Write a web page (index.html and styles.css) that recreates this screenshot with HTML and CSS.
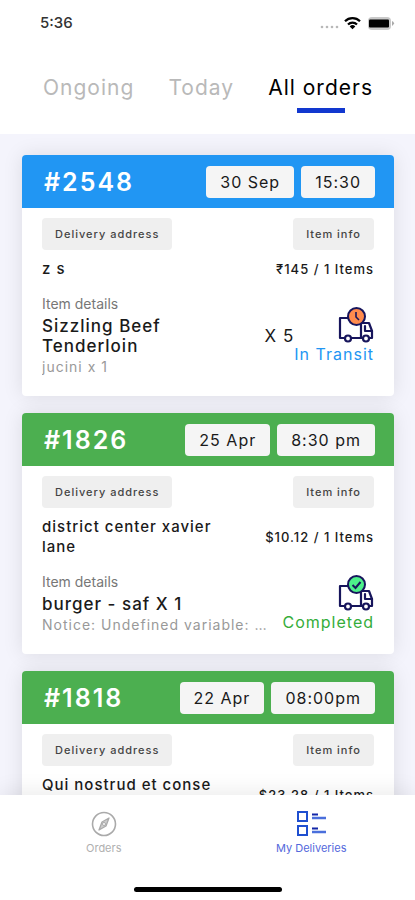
FILE: index.html
```html
<!DOCTYPE html>
<html lang="en">
<head>
<meta charset="utf-8">
<meta name="viewport" content="width=device-width, initial-scale=1">
<title>My Deliveries</title>
<link rel="stylesheet" href="styles.css">
</head>
<body>
<svg class="symbols" aria-hidden="true">
  <symbol id="truck" viewBox="0 0 36 36">
    <g fill="none" stroke="#17155c" stroke-width="2.200" stroke-linejoin="round" stroke-linecap="round">
      <path d="M10 11H2v20h4M12 31h12M30 31h4v-7l-3-8h-8v15"/>
      <path d="M27 19v5h7"/>
      <circle cx="10" cy="31.500" r="3" fill="#fff"/>
      <circle cx="28" cy="31.500" r="3" fill="#fff"/>
    </g>
  </symbol>
</svg>
<div class="app">
  <header class="top">
    <div class="status">
      <time class="clock">5:36</time>
      <svg class="signals" width="76" height="16" viewBox="0 0 76 16" aria-hidden="true">
        <g fill="#b8b8b8"><circle cx="3" cy="12" r="1.3"/><circle cx="8" cy="12" r="1.3"/><circle cx="13" cy="12" r="1.3"/><circle cx="18" cy="12" r="1.3"/></g>
        <g fill="none" stroke="#000" stroke-width="2.2"><path d="M26 6.2a10.5 10.5 0 0 1 15 0M29 9.5a6.3 6.3 0 0 1 9 0"/></g>
        <path d="M30.700 11.400a4 4 0 0 1 5.600 0L33.500 14.200z"/>
        <rect x="49" y="2" width="23" height="13" rx="4" fill="#c9c9c9"/>
        <rect x="50" y="4.500" width="20" height="8" rx="1"/>
        <path d="M73 6q4 2 0 5z" fill="#aaa"/>
      </svg>
    </div>
    <nav class="tabs" aria-label="Order filter">
      <a class="tab" href="#ongoing">Ongoing</a>
      <a class="tab" href="#today">Today</a>
      <a class="tab tab-active" href="#all" aria-current="page">All orders</a>
    </nav>
  </header>

  <main class="orders">
    <article class="card">
      <header class="card-head transit">
        <h2 class="number">#2548</h2>
        <time class="stamp">30 Sep</time>
        <time class="stamp">15:30</time>
      </header>
      <div class="card-body">
        <div class="row">
          <button class="chip" type="button">Delivery address</button>
          <button class="chip" type="button">Item info</button>
        </div>
        <div class="row summary">
          <p class="address">z s</p>
          <p class="price">₹145 / 1 Items</p>
        </div>
        <div class="row details">
          <div class="item">
            <p class="caption">Item details</p>
            <p class="name name-narrow">Sizzling Beef Tenderloin</p>
            <p class="note">jucini x 1</p>
          </div>
          <p class="quantity">X 5</p>
          <div class="state state-transit">
            <svg class="truck" viewBox="0 0 36 36" aria-hidden="true">
              <use href="#truck"/>
              <circle cx="18.500" cy="9.500" r="8.500" fill="#ff8b4d" stroke="#17155c" stroke-width="2"/>
              <path d="M18 5v5l3 3" fill="none" stroke="#17155c" stroke-width="1.600"/>
            </svg>
            <p>In Transit</p>
          </div>
        </div>
      </div>
    </article>

    <article class="card">
      <header class="card-head completed">
        <h2 class="number">#1826</h2>
        <time class="stamp">25 Apr</time>
        <time class="stamp">8:30 pm</time>
      </header>
      <div class="card-body">
        <div class="row">
          <button class="chip" type="button">Delivery address</button>
          <button class="chip" type="button">Item info</button>
        </div>
        <div class="row summary">
          <p class="address">district center xavier lane</p>
          <p class="price">$10.12 / 1 Items</p>
        </div>
        <div class="row details">
          <div class="item">
            <p class="caption">Item details</p>
            <p class="name">burger - saf X 1</p>
            <p class="note">Notice: Undefined variable: …</p>
          </div>
          <div class="state state-completed">
            <svg class="truck" viewBox="0 0 36 36" aria-hidden="true">
              <use href="#truck"/>
              <circle cx="18.500" cy="9.500" r="8.500" fill="#4df08a" stroke="#17155c" stroke-width="2"/>
              <path d="M14.500 10l3 3 5-6" fill="none" stroke="#17155c" stroke-width="2"/>
            </svg>
            <p>Completed</p>
          </div>
        </div>
      </div>
    </article>

    <article class="card">
      <header class="card-head completed">
        <h2 class="number">#1818</h2>
        <time class="stamp">22 Apr</time>
        <time class="stamp">08:00pm</time>
      </header>
      <div class="card-body">
        <div class="row">
          <button class="chip" type="button">Delivery address</button>
          <button class="chip" type="button">Item info</button>
        </div>
        <div class="row summary">
          <p class="address">Qui nostrud et conse<br>&nbsp;</p>
          <p class="price">$23.28 / 1 Items</p>
        </div>
      </div>
    </article>
  </main>

  <footer class="bottom">
    <nav class="bar" aria-label="Main">
      <a class="bar-item" href="#orders">
        <svg width="30" height="28" viewBox="0 0 30 28" fill="none" stroke="#aaa" aria-hidden="true">
          <circle cx="15" cy="14" r="11.500" stroke-width="1.600"/>
          <path d="M20 8l-3 8-7 4 3-8z" fill="#ccc" stroke-width="1.300" stroke-linejoin="round"/>
          <circle cx="15" cy="14" r="1.500" fill="#fff"/>
        </svg>
        <span>Orders</span>
      </a>
      <a class="bar-item bar-active" href="#deliveries" aria-current="page">
        <svg width="30" height="28" viewBox="0 0 30 28" fill="none" stroke="#1f4fd0" stroke-width="2" aria-hidden="true">
          <path d="M2 2h9v9H2zM2 16h9v9H2z"/>
          <path d="M16 4.500h6M16 18.500h6" stroke="#1226a8"/>
          <path d="M16 8h14M16 22h14" stroke="#4a6fdc" stroke-width="2.500"/>
        </svg>
        <span>My Deliveries</span>
      </a>
    </nav>
    <div class="home"></div>
  </footer>
</div>
</body>
</html>
```

FILE: styles.css
```css
* {
  box-sizing: border-box;
}

body,
p,
h2 {
  margin: 0;
}

body {
  font-family: Inter, "Liberation Sans", sans-serif;
  color: #1a1a1a;
  background: #fff;
}

a {
  color: inherit;
  text-decoration: none;
}

.symbols {
  display: block;
  width: 0;
  height: 0;
}

.app {
  display: flex;
  flex-direction: column;
  height: 100vh;
  overflow: hidden;
}

.top {
  flex: none;
  padding: 12px 20px 21px 40px;
}

.status {
  display: flex;
  align-items: center;
  justify-content: space-between;
  line-height: 22px;
}

.clock {
  font-size: 15px;
  font-weight: 500;
  color: #333;
}

.tabs {
  display: flex;
  justify-content: space-between;
  padding: 40px 22px 0 3px;
  font-size: 21px;
  line-height: 28px;
  letter-spacing: 1px;
}

.tab {
  color: #b9b9b9;
}

.tab-active {
  color: #000;
}

.tab::after {
  content: "";
  display: block;
  width: 48px;
  height: 5px;
  margin: 6px auto 0;
}

.tab-active::after {
  background: #1238cf;
}

.orders {
  flex: 1;
  min-height: 0;
  overflow: hidden;
  padding: 21px 21px 0 22px;
  background: #f4f4fc;
}

.card {
  margin-bottom: 17px;
  border-radius: 4px;
  background: #fff;
  box-shadow: 0 0 20px rgba(0, 0, 0, 0.1);
}

.card-head {
  display: flex;
  align-items: center;
  gap: 7px;
  height: 53px;
  padding: 0 19px 0 22px;
  border-radius: 4px 4px 0 0;
}

.transit {
  background: #2196f3;
}

.completed {
  background: #4caf50;
}

.number {
  flex: 1;
  font-size: 25px;
  font-weight: 600;
  letter-spacing: 2px;
  color: #fff;
}

.stamp {
  padding: 0 14px;
  border-radius: 4px;
  font-size: 16px;
  line-height: 32px;
  letter-spacing: 1px;
  background: #f5f5f5;
}

.card-body {
  padding: 10px 20px 18px;
}

.row {
  display: flex;
  align-items: center;
  justify-content: space-between;
}

.chip {
  padding: 0 13px;
  border: 0;
  border-radius: 4px;
  font: 500 11px/32px Inter, "Liberation Sans", sans-serif;
  letter-spacing: 1px;
  color: #444;
  background: #efefef;
}

.summary {
  padding-top: 9px;
}

.address {
  width: 180px;
  font-size: 15px;
  font-weight: 500;
  line-height: 20px;
  letter-spacing: 1px;
}

.price {
  font-size: 13px;
  font-weight: 500;
  letter-spacing: 1px;
}

.details {
  padding-top: 15px;
}

.item {
  flex: 1;
  min-width: 0;
}

.caption {
  font-size: 14px;
  line-height: 20px;
  color: #777;
}

.name {
  padding-top: 2px;
  font-size: 17px;
  font-weight: 500;
  line-height: 20px;
  letter-spacing: 1px;
}

.name-narrow {
  width: 160px;
}

.note {
  overflow: hidden;
  font-size: 14px;
  line-height: 22px;
  letter-spacing: 1px;
  color: #999;
  text-overflow: ellipsis;
  white-space: nowrap;
}

.quantity {
  font-size: 17px;
  letter-spacing: 1px;
}

.state {
  display: flex;
  flex-direction: column;
  align-items: flex-end;
  margin-left: 8px;
  font-size: 16px;
  line-height: 22px;
  letter-spacing: 1px;
}

.state-transit {
  margin-left: 0;
  color: #2196f3;
}

.state-completed {
  color: #34ad3a;
}

.truck {
  width: 36px;
  height: 36px;
}

.bottom {
  z-index: 1;
  flex: none;
  padding: 15px 0 8px;
  background: #fff;
  box-shadow: 0 -4px 20px rgba(0, 0, 0, 0.08);
}

.bar {
  display: flex;
}

.bar-item {
  display: flex;
  flex: 1;
  flex-direction: column;
  align-items: center;
  gap: 1px;
  font-size: 11px;
  line-height: 18px;
  color: #b0b0b0;
}

.bar-active {
  color: #5468dc;
}

.home {
  width: 148px;
  height: 5px;
  margin: 30px auto 0;
  border-radius: 3px;
  background: #000;
}
```
